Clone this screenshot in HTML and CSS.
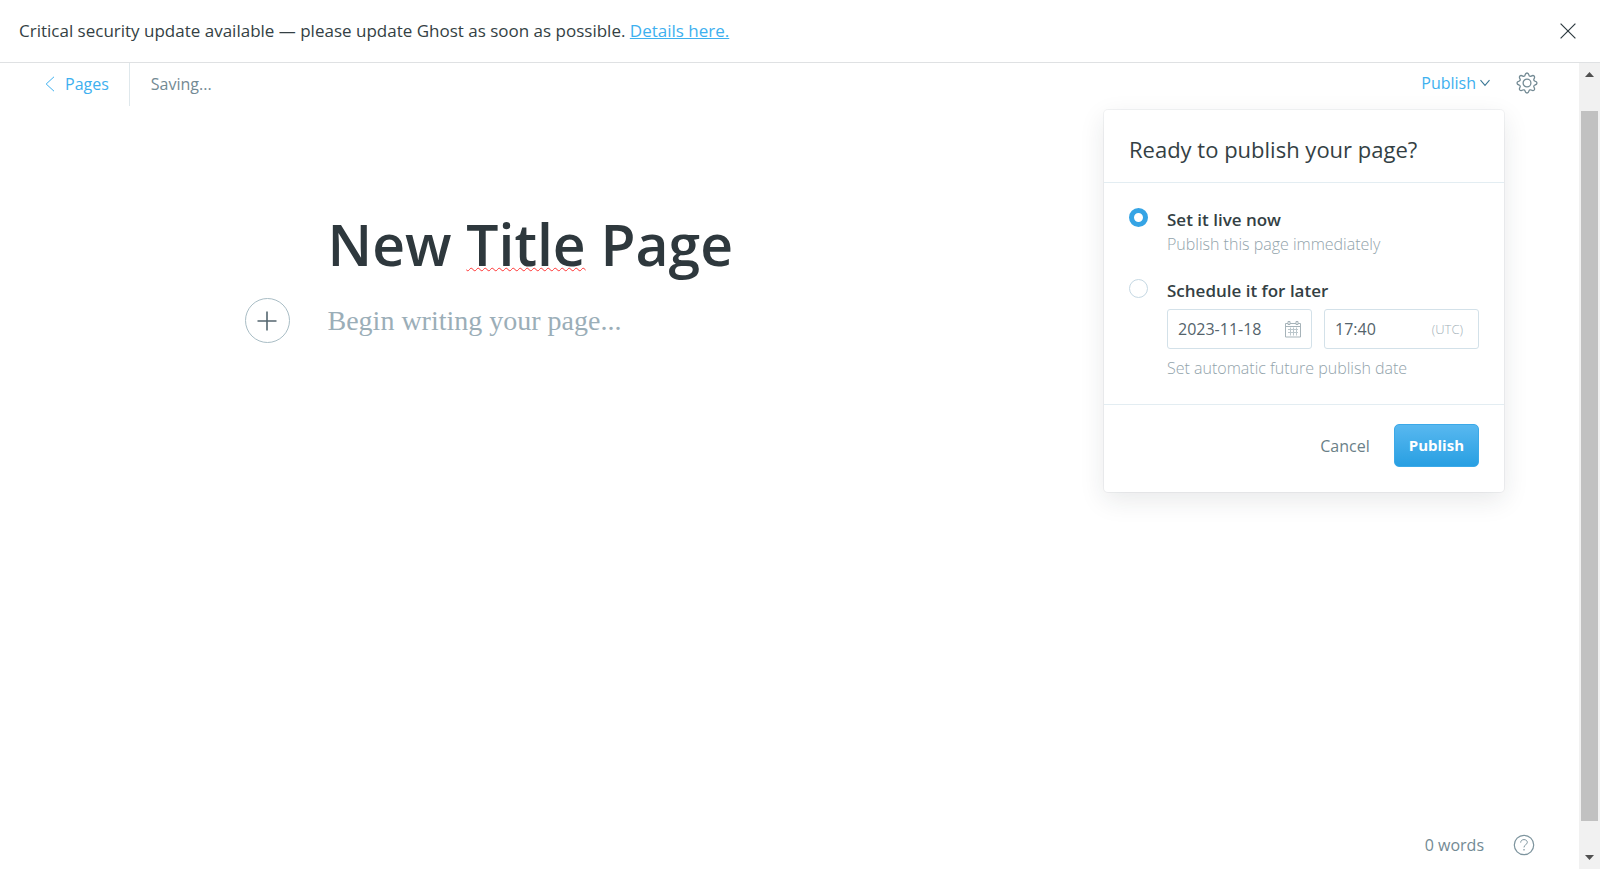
FILE: index.html
```html
<!DOCTYPE html>
<html lang="en">
<head>
<meta charset="utf-8">
<title>New Title Page</title>
<link rel="stylesheet" href="styles.css">
</head>
<body>
<div class="banner">
  <p class="banner-text">Critical security update available — please update Ghost as soon as possible. <a href="#details">Details here.</a></p>
  <button class="icon-button" type="button" aria-label="Close">
    <svg width="16" height="16" viewBox="0 0 16 16" fill="none" stroke="#2e3a40" stroke-width="1.2"><path d="M.6.6l14.8 14.8M15.4.6L.6 15.4"/></svg>
  </button>
</div>
<div class="viewport">
  <main class="editor">
    <header class="toolbar">
      <a class="back" href="#pages">
        <svg width="10" height="16" viewBox="0 0 10 16" fill="none" stroke="#3eb0ef"><path d="M9 .8L1.2 8 9 15.2"/></svg>
        Pages
      </a>
      <span class="status">Saving...</span>
      <div class="actions">
        <button class="publish-toggle" type="button" aria-expanded="true">
          Publish
          <svg width="10" height="8" viewBox="0 0 10 8" fill="none" stroke="#3b7896" stroke-width="1.1"><path d="M.5 1.2L5 6.400l4.500-5.200"/></svg>
        </button>
        <button class="icon-button" type="button" aria-label="Settings">
          <svg width="22" height="22" viewBox="0 0 22 22" fill="none" stroke="#738a94" stroke-width="1.3" stroke-linejoin="round"><circle cx="11" cy="11" r="3.9"/><path d="M9 3.2C9.400 1.600 9.900 1 11 1s1.600.6 2 2.200c.3 1 1.300 1.400 2.200.9 1.400-.8 2.200-.8 2.900-.1s.7 1.500-.1 2.900c-.5.9-.1 1.900.9 2.200 1.500.4 2.100.9 2.100 1.900s-.6 1.600-2.100 2c-1 .3-1.400 1.300-.9 2.200.8 1.400.8 2.200.1 2.900s-1.500.7-2.900-.1c-.9-.5-1.900-.1-2.200.9-.4 1.500-.9 2.100-2 2.100s-1.600-.6-2-2.100c-.3-1-1.300-1.400-2.200-.9-1.400.8-2.200.8-2.900.1s-.7-1.500.1-2.900c.5-.9.1-1.900-.9-2.200C1.600 12.600 1 12.100 1 11s.6-1.500 2.100-1.900c1-.3 1.400-1.300.9-2.200-.8-1.400-.8-2.200-.1-2.900s1.500-.7 2.900.1c.9.500 1.900.1 2.200-.9z"/></svg>
        </button>
      </div>
      <form class="menu">
        <h2 class="menu-title">Ready to publish your page?</h2>
        <div class="menu-body">
          <div class="option">
            <input class="radio" type="radio" name="when" id="now" checked>
            <div class="option-body">
              <label class="option-label" for="now">Set it live now</label>
              <p class="hint">Publish this page immediately</p>
            </div>
          </div>
          <div class="option">
            <input class="radio" type="radio" name="when" id="later">
            <div class="option-body">
              <label class="option-label" for="later">Schedule it for later</label>
              <div class="fields">
                <label class="field date">
                  <input type="text" value="2023-11-18" aria-label="Date">
                  <svg width="16" height="17" viewBox="0 0 16 17" fill="none" stroke="#a6b3b9"><path d="M.5 2.500h15v13.500H.5zM.5 5.500h15"/><path stroke="#bcc7cc" d="M3 8.500h10M3 11.500h10M5.500 6.500v8M8.500 6.500v8M11.500 6.500v8"/><path d="M3 .5h2v3H3zM11 .5h2v3h-2z" fill="#fff"/></svg>
                </label>
                <label class="field time">
                  <input type="text" value="17:40" aria-label="Time">
                  <span class="zone">(UTC)</span>
                </label>
              </div>
              <p class="hint">Set automatic future publish date</p>
            </div>
          </div>
        </div>
        <div class="menu-footer">
          <button class="cancel" type="button">Cancel</button>
          <button class="submit" type="button">Publish</button>
        </div>
      </form>
    </header>
    <article class="page">
      <h1 class="page-title">New <span class="misspelt">Title</span> Page</h1>
      <div class="block">
        <button class="add" type="button" aria-label="Add a card">
          <svg width="20" height="20" viewBox="0 0 20 20" stroke="#54666f" stroke-width="1.6"><path d="M10 .5v19M.5 10h19"/></svg>
        </button>
        <p class="placeholder">Begin writing your page...</p>
      </div>
    </article>
    <footer class="status-bar">
      <span>0 words</span>
      <a class="help" href="#help" aria-label="Help">
        <svg width="22" height="22" viewBox="0 0 22 22" fill="none" stroke="#7d949e" stroke-width="1.2"><circle cx="11" cy="11" r="9.700"/><path stroke-width="1" d="M7.700 8.600c0-1.900 1.400-3 3.300-3s3.300 1.100 3.300 2.800c0 2.300-3.300 2.300-3.300 5"/><path d="M11 15v1.500"/></svg>
      </a>
    </footer>
  </main>
  <div class="scrollbar" aria-hidden="true">
    <svg width="9" height="5" viewBox="0 0 9 5" fill="#505050"><path d="M0 5L4.500 0 9 5z"/></svg>
    <div class="thumb"></div>
    <svg width="9" height="5" viewBox="0 0 9 5" fill="#505050"><path d="M0 0l4.500 5L9 0z"/></svg>
  </div>
</div>
</body>
</html>
```

FILE: styles.css
```css
* { box-sizing: border-box; }

body {
  margin: 0;
  min-height: 100vh;
  display: flex;
  flex-direction: column;
  background: #fff;
  color: #343f44;
  font: 16px/20px "Open Sans", "Noto Sans", sans-serif;
}

h1, h2, p { margin: 0; font-weight: 400; }

a { color: #3eb0ef; }

button {
  padding: 0;
  border: 0;
  background: none;
  font: inherit;
  cursor: pointer;
}

svg { display: block; flex: none; }

.banner {
  display: flex;
  align-items: center;
  justify-content: space-between;
  padding: 18px 24px 18px 19px;
  border-bottom: 1px solid #dfe1e3;
}

.banner-text { font-size: 17px; line-height: 26px; }

.viewport { flex: 1; display: flex; }

.editor {
  flex: 1;
  display: flex;
  flex-direction: column;
}

.toolbar {
  position: relative;
  display: flex;
  align-items: stretch;
  height: 43px;
  padding: 0 41px 0 45px;
}

.back {
  display: flex;
  align-items: center;
  gap: 10px;
  padding: 0 20px 2px 0;
  border-right: 1px solid #dfe8ec;
  text-decoration: none;
}

.status {
  align-self: center;
  padding: 0 0 2px 21px;
  color: #738a94;
}

.actions {
  display: flex;
  align-items: center;
  gap: 26px;
  margin-left: auto;
  padding-bottom: 4px;
}

.publish-toggle {
  display: flex;
  align-items: center;
  gap: 4px;
  color: #3eb0ef;
}

.menu {
  position: absolute;
  top: 47px;
  right: 75px;
  width: 400px;
  border-radius: 4px;
  background: #fff;
  box-shadow: 0 0 0 1px rgba(99, 114, 130, .08), 0 8px 26px rgba(27, 39, 51, .1);
}

.menu-title {
  padding: 23px 25px 17px;
  border-bottom: 1px solid #e3edf2;
  font-size: 22px;
  line-height: 32px;
}

.menu-body {
  display: flex;
  flex-direction: column;
  gap: 23px;
  padding: 25px 25px 24px;
}

.option { display: flex; gap: 19px; }

.radio {
  appearance: none;
  flex: none;
  width: 19px;
  height: 19px;
  margin: 0;
  border: 1px solid #c5d8e3;
  border-radius: 50%;
  background: #fff;
}

.radio:checked { border: 5px solid #35a4e5; }

.option-body { flex: 1; min-width: 0; }

.option-label {
  display: block;
  font-size: 17px;
  font-weight: 600;
  line-height: 24px;
}

.hint { color: #92a3ab; font-weight: 300; line-height: 24px; }

.fields {
  display: grid;
  grid-template-columns: 145fr 155fr;
  gap: 12px;
  margin: 6px 0 7px;
}

.field {
  display: flex;
  align-items: center;
  min-width: 0;
  height: 40px;
  padding: 0 10px;
  border: 1px solid #d3e1e9;
  border-radius: 3px;
}

.time { padding-right: 15px; }

.field input {
  flex: 1;
  min-width: 0;
  padding: 0;
  border: 0;
  outline: 0;
  background: none;
  color: #54636b;
  font: inherit;
}

.zone { color: #a3b1b8; font-size: 13px; font-weight: 300; }

.menu-footer {
  display: flex;
  align-items: center;
  justify-content: flex-end;
  gap: 24px;
  padding: 19px 25px 25px;
  border-top: 1px solid #e3edf2;
}

.cancel { color: #6b7f88; }

.submit {
  padding: 11px 14px;
  border: 1px solid #3ba9e8;
  border-radius: 5px;
  background: linear-gradient(#58b8f0, #289fe2);
  color: #fff;
  font-size: 15px;
  font-weight: 700;
  line-height: 19px;
}

.page {
  flex: 1;
  width: 100%;
  max-width: 924px;
  margin: 0 auto;
  padding-top: 98px;
}

.page-title {
  color: #2e383d;
  font-size: 57px;
  font-weight: 600;
  line-height: 80px;
}

.misspelt {
  text-decoration: underline wavy #f33 1px;
  text-decoration-skip-ink: none;
  text-underline-offset: 1px;
}

.block {
  display: flex;
  align-items: center;
  gap: 38px;
  margin: 14px 0 0 -83px;
}

.add {
  display: grid;
  place-items: center;
  width: 45px;
  height: 45px;
  border: 1px solid #a9bdc5;
  border-radius: 50%;
}

.placeholder {
  color: #9baeb8;
  font: 28px/32px "Liberation Serif", serif;
}

.status-bar {
  display: flex;
  align-items: center;
  justify-content: flex-end;
  gap: 29px;
  padding: 0 44px 13px;
  color: #738a94;
}

.scrollbar {
  display: flex;
  flex-direction: column;
  align-items: center;
  gap: 34px;
  width: 21px;
  padding: 9px 0;
  background: #f1f1f1;
}

.thumb { flex: 1; width: 17px; background: #c1c1c1; }
```
